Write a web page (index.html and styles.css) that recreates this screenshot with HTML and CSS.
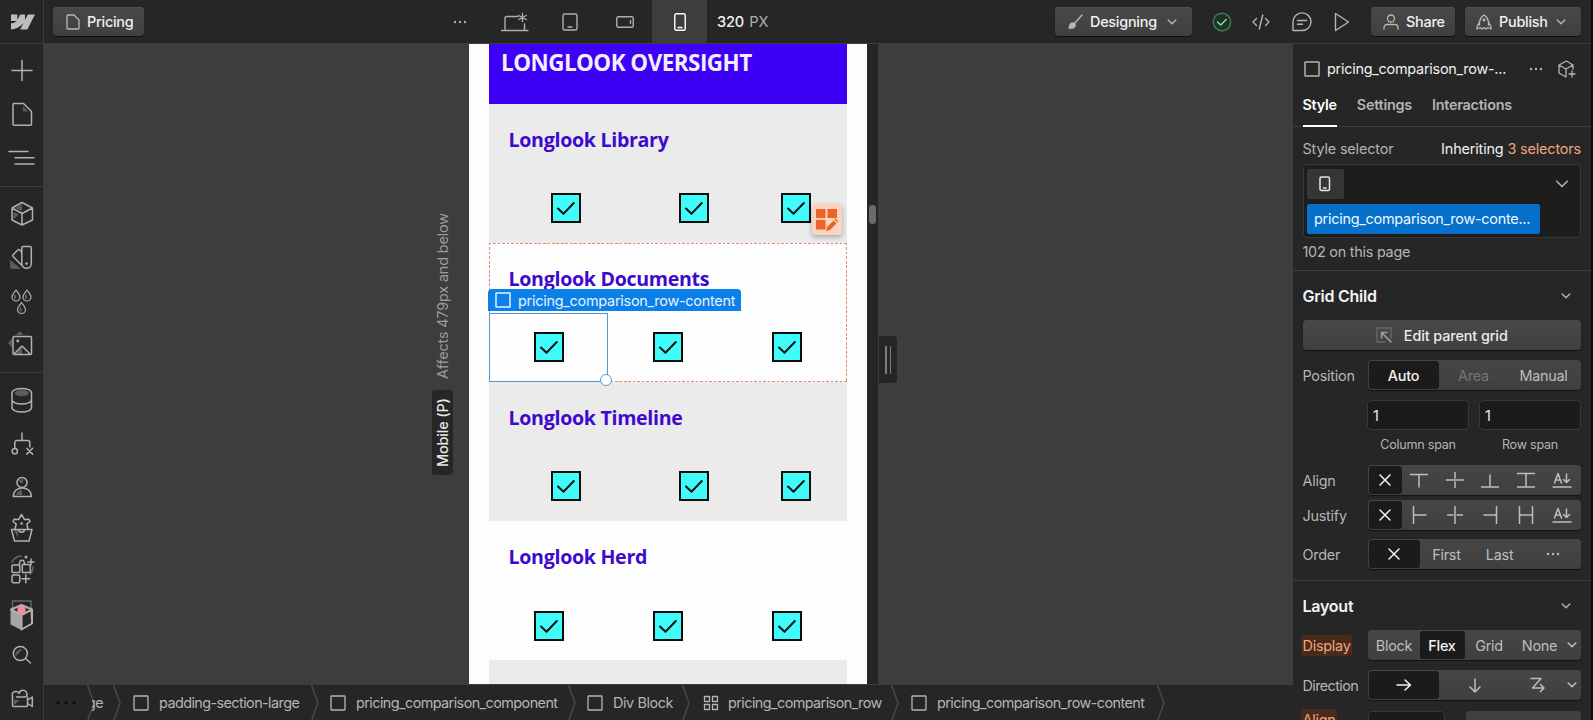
FILE: index.html
```html
<!DOCTYPE html>
<html lang="en">
<head>
    <meta charset="UTF-8">
    <meta name="viewport" content="width=device-width, initial-scale=1.0">
    <title>Pricing - Designer</title>
    <link rel="stylesheet" href="styles.css">
</head>
<body>
    <svg class="defs">
        <symbol id="square" viewBox="0 0 16 16"><rect x="1" y="1" width="14" height="14" rx=".5"/></symbol>
        <symbol id="chevron" viewBox="0 0 10 8"><path d="M1.2 2 5 5.8 8.8 2"/></symbol>
        <symbol id="dots" viewBox="0 0 14 4"><g fill="currentColor" stroke="none"><circle cx="2" cy="2" r="1.2"/><circle cx="7" cy="2" r="1.2"/><circle cx="12" cy="2" r="1.2"/></g></symbol>
        <symbol id="close" viewBox="0 0 12 12"><path d="m1 1 10 10M11 1 1 11"/></symbol>
        <symbol id="check" viewBox="0 0 26 26"><path d="m5 13.5 5.500 5.300L20.800 8"/></symbol>
        <symbol id="sep" viewBox="0 0 8 36"><path d="M.5 0 7 18 .5 36"/></symbol>
        <symbol id="baseline" viewBox="0 0 20 16"><path d="M1 15h18M2.500 11 6 1.500 9.500 11M3.700 8h4.600M14.500 2v8.500M11.500 7.500l3 3 3-3"/></symbol>
    </svg>

    <div class="app">
        <header class="topbar">
            <div class="logo">
                <svg width="24" height="24" viewBox="0 0 24 24"><path d="M24 4.515l-7.658 14.97H9.149l3.205-6.204h-.144C9.566 16.713 5.621 18.973 0 19.485v-6.118s3.596-.213 5.710-2.435H0V4.515h6.417v5.278l.144-.001 2.622-5.277h4.854v5.244h.144l2.720-5.244H24z"/></svg>
            </div>
            <button class="btn btn-page">
                <svg width="14" height="16"><path d="M1 2a1 1 0 0 1 1-1h6l5 5v8a1 1 0 0 1-1 1H2a1 1 0 0 1-1-1z"/></svg>
                <span>Pricing</span>
            </button>

            <div class="devices">
                <div class="device"><svg width="14" height="4"><use href="#dots"/></svg></div>
                <div class="device"><svg width="28" height="20"><path d="M0 18.500h27M4 18.500V6a1.500 1.500 0 0 1 1.500-1.500H17M23.500 12v6.500M21.500 1.500v8M17.700 3.500l7.600 4M25.300 3.500l-7.600 4"/></svg></div>
                <div class="device"><svg width="16" height="18"><rect x="1" y="1" width="14" height="16" rx="1.500"/><path d="M6 14h4"/></svg></div>
                <div class="device"><svg width="18" height="12"><rect x=".8" y=".8" width="16.400" height="10.400" rx="1.500"/><path d="M14.500 4.500v3"/></svg></div>
                <div class="device active"><svg width="12" height="18"><rect x=".8" y=".8" width="10.400" height="16.400" rx="1.500"/><path d="M4 14.500h4"/></svg></div>
                <div class="width"><b>320</b> PX</div>
            </div>

            <div class="actions">
                <button class="btn btn-mode">
                    <svg width="15" height="15"><path d="m14 1-7 8"/><path d="M1 14c1-1 0-5 4-5 3 0 3 5-1 5z" fill="currentColor"/></svg>
                    <span>Designing</span>
                    <svg class="chev" width="10" height="8"><use href="#chevron"/></svg>
                </button>
                <svg class="act status" width="20" height="20"><circle cx="10" cy="10" r="8.700"/><path d="m5.500 10 3.300 3 5.400-5.500"/></svg>
                <svg class="act code" width="18" height="16"><path d="M4.500 4.500 1 8l3.500 3.500M13.500 4.500 17 8l-3.500 3.500M10.800 1 7.200 15"/></svg>
                <svg class="act comment" width="20" height="20"><path d="M1 18.500V10A9 8.800 0 1 1 10 18.500zM5.500 8.500h9M5.500 12.200h5"/></svg>
                <svg class="act play" width="16" height="20"><path d="M1.500 1.500 14.500 10 1.500 18.500z"/></svg>
                <button class="btn btn-share">
                    <svg width="16" height="16"><circle cx="8" cy="4.500" r="3.500"/><path d="M1 15v-1.500a3 3 0 0 1 3-3h8a3 3 0 0 1 3 3V15"/></svg>
                    <span>Share</span>
                </button>
                <button class="btn btn-publish">
                    <svg width="16" height="16"><path d="M3.500 11C3 6 5 3 8 1c3 2 5 5 4.500 10M3.500 8 1 12.500V15l3-1.500 2 1.500 2-1.500 2 1.500 2-1.500 3 1.500v-2.500L12.500 8"/><circle cx="8" cy="6" r=".8"/></svg>
                    <span>Publish</span>
                    <svg class="chev" width="10" height="8"><use href="#chevron"/></svg>
                </button>
            </div>
        </header>

        <nav class="sidebar">
            <div class="side-group">
                <svg><path d="M22 10.500v20M12 20.500h20"/></svg>
                <svg><path d="M13 11.500a1 1 0 0 1 1-1h9.500l8 8v12.800a1 1 0 0 1-1 1H14a1 1 0 0 1-1-1z"/><path class="shade" d="M23 13v5.500h5z"/></svg>
                <svg><path d="M9 15.500h19M15 21.700h19M15 28h19"/></svg>
            </div>
            <div class="side-group">
                <svg><path class="shade" d="m15 16 7-4v7zM13.500 20l5 2.500-5 5z"/><path d="m22 10.500 10.500 5.500v12L22 33l-10-5V16zM12 16l10 5.500L32.500 16M22 21.500V33"/></svg>
                <svg><path class="shade" d="M10 25 21 34H12q-2 0-2-2z"/><path d="M21.800 13a1.500 1.500 0 0 1 1.500-1.500h6.500a1.500 1.500 0 0 1 1.500 1.500v15.500a4.700 4.700 0 0 1-9.500 0zM21.800 17.500l-2-2.500q-1-.8-2 0l-4.500 4.500q-1 1 0 2.200L23.500 32"/><circle cx="26.500" cy="28.500" r=".6"/></svg>
                <svg class="drops"><path d="M16 12c2 3 4 5 4 7a4 4 0 0 1-8 0c0-2 2-4 4-7zM27 12c2 3 4 5 4 7a4 4 0 0 1-8 0c0-2 2-4 4-7zM21.500 24.500c2 3 4 5 4 7a4 4 0 0 1-8 0c0-2 2-4 4-7z"/><path class="shade" d="M14 17h2v4h-2zM25 17h2v4h-2zM19.500 29.500h2v4h-2z"/></svg>
                <svg><path class="shade" d="m20 10 3.500 4H16zM8 22l4-4.500v9zM18 30l4-4v7h-6z"/><rect x="13" y="15.500" width="18.500" height="18" rx="1"/><path d="m14 33 8-8 8 8"/><circle cx="17.800" cy="20" r=".7"/></svg>
            </div>
            <div class="side-group">
                <svg><ellipse class="shade" cx="21.700" cy="14" rx="7" ry="3.300"/><path d="M12 14v14.500c0 6 19.500 6 19.500 0V14c0-6-19.500-6-19.500 0zM12 20.500c0 6 19.500 6 19.500 0"/></svg>
                <svg><path d="M22 11v7.500M14.800 25.500v-5a2 2 0 0 1 2-2h11a2 2 0 0 1 2 2V25M26.800 26.300l5.800 5.800M32.600 26.300l-5.800 5.800"/><circle cx="14.800" cy="29.200" r="2.600"/></svg>
                <svg><path class="shade" d="M16 30c1-3 3-5 6-5v5zM19 15l4-1v4h-3z"/><circle cx="22" cy="17.500" r="5"/><path d="M13.300 31.500c0-11.500 18-11.500 18 0z"/></svg>
                <svg class="item-shop"><path class="shade" d="M14 22h4v8z"/><path d="M11.500 21.500h20.500l-3 11.500H14.500zM15 21l1.200-5-3.200-2.500 1-2.200 4.500.3L21.500 6.500l3 5.100 4.500-.3 1 2.200-3.200 2.500 1.200 5M18.800 21.500a2.800 2.800 0 0 0 5.600 0"/><circle cx="21.600" cy="15.500" r=".6"/></svg>
                <svg class="item-apps"><path class="dim" d="M12 14q3-5.500 9-6M33 19q0 4-2.500 7"/><rect x="12" y="17" width="7.800" height="7.500" rx="1"/><path d="M22.300 24.500v-8h6.500l1.500 1.500v6.500zM19.500 16.500q-.5-5 4-4l1.500 4M25.800 26.800v8M22 30.700h7.800M31 11v6M28 14h6"/><rect x="12" y="27" width="7.800" height="7.800" rx="1.500"/><circle cx="26" cy="9" r=".8"/></svg>
                <svg class="item-box"><path class="dim" d="M12.500 26V9h18.500v17"/><path class="face" d="m10.500 18 11 5.500V38L10.500 32.500z"/><path d="M11 17.500 21.500 13l10.500 4.500v14L21.500 37.500V23zM11 17.500l10.500 5.700L32 17.500" stroke-width="2"/><circle class="pink" cx="21.500" cy="18" r="4.300"/></svg>
                <svg class="item-search"><path class="shade" d="M15.500 19c-1-5 2-8 7-8z"/><circle cx="20.300" cy="15.500" r="7"/><path d="m25.500 20.500 5 4.500"/></svg>
                <svg class="item-video"><path class="shade" d="M14 26h6l-6 5z"/><path d="M12.500 22.500v9q0 1 1 1h13q1 0 1-1V23M27.800 26l4.500-3v9.500l-4.500-3"/><path d="M12.500 22.500a3.500 3.500 0 1 1 6.500-3 4 4 0 1 1 7.500 2.500q-1 1-2 1h-8"/></svg>
            </div>
        </nav>

        <main class="canvas">
            <div class="gutter">
                <div class="breakpoint">
                    <span class="bp-name">Mobile (P)</span>
                    <span>Affects 479px and below</span>
                </div>
            </div>
            <div class="page">
                <div class="page-header">LONGLOOK OVERSIGHT</div>
                <section class="row shaded">
                    <h3>Longlook Library</h3>
                    <div class="cells">
                        <span class="box"><svg><use href="#check"/></svg></span>
                        <span class="box"><svg><use href="#check"/></svg></span>
                        <span class="box"><svg><use href="#check"/></svg></span>
                    </div>
                </section>
                <section class="row parent">
                    <h3>Longlook Documents</h3>
                    <div class="cells">
                        <span class="box"><svg><use href="#check"/></svg></span>
                        <span class="box"><svg><use href="#check"/></svg></span>
                        <span class="box"><svg><use href="#check"/></svg></span>
                    </div>
                    <div class="selection"><i></i></div>
                    <div class="sel-label"><svg width="16" height="16"><use href="#square"/></svg><span>pricing_comparison_row-content</span></div>
                    <div class="grid-edit">
                        <svg width="22" height="22"><path d="M0 0h9.500v9H0zM11.500 0H21v9h-9.500zM0 11h9.500v9.500H0zM10 22l1-4 6.500-6.500 3 3L14 21zM18.500 10.500l1-1 3 3-1 1z"/></svg>
                    </div>
                </section>
                <section class="row shaded">
                    <h3>Longlook Timeline</h3>
                    <div class="cells">
                        <span class="box"><svg><use href="#check"/></svg></span>
                        <span class="box"><svg><use href="#check"/></svg></span>
                        <span class="box"><svg><use href="#check"/></svg></span>
                    </div>
                </section>
                <section class="row">
                    <h3>Longlook Herd</h3>
                    <div class="cells">
                        <span class="box"><svg><use href="#check"/></svg></span>
                        <span class="box"><svg><use href="#check"/></svg></span>
                        <span class="box"><svg><use href="#check"/></svg></span>
                    </div>
                </section>
                <section class="row shaded"></section>
            </div>
            <div class="scrollbar"><i></i></div>
            <div class="resize"><i></i><i></i></div>
        </main>

        <footer class="crumbs">
            <div class="crumb-more"><svg width="20" height="4" viewBox="0 0 20 4"><circle cx="2" cy="2" r="1.800"/><circle cx="10" cy="2" r="1.800"/><circle cx="18" cy="2" r="1.800"/></svg></div>
            <svg class="sep"><use href="#sep"/></svg>
            <div class="crumb-cut"><span>ge</span></div>
            <svg class="sep"><use href="#sep"/></svg>
            <div class="crumb c1"><svg width="16" height="16"><use href="#square"/></svg><span>padding-section-large</span></div>
            <svg class="sep"><use href="#sep"/></svg>
            <div class="crumb c2"><svg width="16" height="16"><use href="#square"/></svg><span>pricing_comparison_component</span></div>
            <svg class="sep"><use href="#sep"/></svg>
            <div class="crumb c3"><svg width="16" height="16"><use href="#square"/></svg><span>Div Block</span></div>
            <svg class="sep"><use href="#sep"/></svg>
            <div class="crumb c4"><svg width="16" height="16"><path d="M1.500 1.500h5v5h-5zM9.500 1.500h5v5h-5zM1.500 9.500h5v5h-5zM9.500 9.500h5v5h-5z"/></svg><span>pricing_comparison_row</span></div>
            <svg class="sep"><use href="#sep"/></svg>
            <div class="crumb c5"><svg width="16" height="16"><use href="#square"/></svg><span>pricing_comparison_row-content</span></div>
            <svg class="sep"><use href="#sep"/></svg>
        </footer>

        <aside class="panel">
            <div class="element">
                <svg width="16" height="16"><use href="#square"/></svg>
                <span class="element-name">pricing_comparison_row-...</span>
                <svg width="14" height="4"><use href="#dots"/></svg>
                <svg class="component" width="18" height="18"><path d="M8 17 1 13V5l7.500-4L15 5v4M1 5l7 4 7-4M8 9v8M14 11v6M11 14h6"/></svg>
            </div>
            <div class="tabs">
                <span class="tab active">Style</span>
                <span class="tab">Settings</span>
                <span class="tab">Interactions</span>
            </div>
            <div class="selector">
                <div class="selector-head"><span>Style selector</span><span class="inherit">Inheriting <em>3 selectors</em></span></div>
                <div class="selector-box">
                    <div class="selector-top">
                        <span class="chip-device"><svg width="12" height="16"><rect x="1" y="1" width="9.500" height="13.500" rx="1.500"/><path d="M4.500 12h2.500"/></svg></span>
                        <svg width="14" height="12" viewBox="0 0 10 8"><use href="#chevron"/></svg>
                    </div>
                    <span class="chip">pricing_comparison_row-conte...</span>
                </div>
                <div class="count">102 on this page</div>
            </div>

            <div class="section grid-child">
                <div class="section-head"><span>Grid Child</span><svg width="10" height="8"><use href="#chevron"/></svg></div>
                <button class="edit-grid">
                    <svg width="16" height="16"><path class="dim" d="M1 15V1h14v10M1 15h8"/><path d="M5.500 11V5.500H11M5.500 5.500 15 15"/></svg>
                    <span>Edit parent grid</span>
                </button>
                <div class="field position">
                    <label>Position</label>
                    <div class="seg"><span class="on">Auto</span><span class="off">Area</span><span>Manual</span></div>
                </div>
                <div class="field spans">
                    <label></label>
                    <div class="span-input"><input type="text" value="1"><small>Column span</small></div>
                    <div class="span-input"><input type="text" value="1"><small>Row span</small></div>
                </div>
                <div class="field align">
                    <label>Align</label>
                    <div class="seg icons">
                        <span class="on"><svg width="12" height="12"><use href="#close"/></svg></span>
                        <span><svg width="18" height="16"><path d="M0 2.500h18M9 2.500V15"/></svg></span>
                        <span><svg width="18" height="16"><path d="M0 8h18M9 0v6M9 10v6"/></svg></span>
                        <span><svg width="18" height="16"><path d="M0 15h18M9 3v12"/></svg></span>
                        <span><svg width="18" height="16"><path d="M0 1.500h18M0 15h18M9 1.500V15"/></svg></span>
                        <span><svg width="20" height="16"><use href="#baseline"/></svg></span>
                    </div>
                </div>
                <div class="field justify">
                    <label>Justify</label>
                    <div class="seg icons">
                        <span class="on"><svg width="12" height="12"><use href="#close"/></svg></span>
                        <span><svg width="16" height="18"><path d="M2.500 0v18M2.500 9H15"/></svg></span>
                        <span><svg width="16" height="18"><path d="M8 0v18M0 9h6M10 9h6"/></svg></span>
                        <span><svg width="16" height="18"><path d="M14.500 0v18M2 9h12.500"/></svg></span>
                        <span><svg width="16" height="18"><path d="M1.500 0v18M14.500 0v18M1.500 9h13"/></svg></span>
                        <span><svg width="20" height="16"><use href="#baseline"/></svg></span>
                    </div>
                </div>
                <div class="field order">
                    <label>Order</label>
                    <div class="seg">
                        <span class="on"><svg width="12" height="12"><use href="#close"/></svg></span>
                        <span>First</span><span>Last</span>
                        <span><svg width="14" height="4"><use href="#dots"/></svg></span>
                    </div>
                </div>
            </div>

            <div class="section layout">
                <div class="section-head"><span>Layout</span><svg width="10" height="8"><use href="#chevron"/></svg></div>
                <div class="field display">
                    <label><mark>Display</mark></label>
                    <div class="seg"><span>Block</span><span class="on">Flex</span><span>Grid</span><span>None</span><span><svg width="10" height="8"><use href="#chevron"/></svg></span></div>
                </div>
                <div class="field direction">
                    <label>Direction</label>
                    <div class="seg">
                        <span class="on"><svg width="16" height="14"><path d="M1 7h13.500M9 2l5.500 5L9 12"/></svg></span>
                        <span><svg width="12" height="15"><path d="M6 1v13M1 9l5 5 5-5"/></svg></span>
                        <span><svg width="16" height="16"><path d="M1 1.500h10L2.500 11H14M10.500 7.500 14 11l-3.500 3.500"/></svg></span>
                        <span><svg width="10" height="8"><use href="#chevron"/></svg></span>
                    </div>
                </div>
                <div class="field flex-align">
                    <label><mark>Align</mark></label>
                    <div class="stub-dark"></div>
                    <div class="stub-light"></div>
                </div>
            </div>
        </aside>
    </div>
</body>
</html>
```
FILE: styles.css
```css
* {
    box-sizing: border-box;
}

body {
    margin: 0;
    height: 720px;
    overflow: hidden;
    background: #0b0b0b;
    color: #b4b4b4;
    font-family: Inter, "Liberation Sans", sans-serif;
    font-size: 14.4px;
    letter-spacing: -0.24px;
}

svg {
    display: block;
    flex: none;
    fill: none;
    stroke: currentColor;
    stroke-width: 1.5;
    stroke-linecap: round;
    stroke-linejoin: round;
}

.defs {
    position: absolute;
    width: 0;
    height: 0;
}

.app {
    display: grid;
    grid-template-columns: 44px 1249px 298px;
    grid-template-rows: 44px 640px 36px;
    width: 1591px;
}

/* top bar */
.topbar {
    grid-column: 1 / 4;
    display: flex;
    align-items: center;
    background: #262626;
    border-bottom: 1px solid #3c3c3c;
}

.logo {
    display: flex;
    align-items: center;
    width: 44px;
    height: 43px;
    padding-left: 11px;
    border-right: 1px solid #3c3c3c;
}

.logo svg {
    fill: #bdbdbd;
    stroke: none;
}

.btn {
    display: flex;
    align-items: center;
    height: 29px;
    padding: 0;
    border: 0;
    border-radius: 4px;
    background: linear-gradient(#484848, #404040);
    box-shadow: 0 1px 1px #111, inset 0 1px 0 #505050;
    color: #b8b8b8;
    font: inherit;
    letter-spacing: inherit;
    white-space: nowrap;
}

.btn span {
    color: #f0f0f0;
    font-weight: 500;
}

.btn svg {
    stroke-width: 1.3;
}

.btn .chev {
    margin-left: auto;
    margin-right: 15px;
}

.btn-page {
    width: 91px;
    margin-left: 9px;
    padding-left: 13px;
    gap: 7px;
}

.devices {
    display: flex;
    align-items: center;
    height: 43px;
    margin-left: 288px;
    color: #adadad;
}

.devices svg {
    stroke-width: 1.4;
}

.device {
    display: flex;
    align-items: center;
    justify-content: center;
    width: 55px;
    height: 43px;
}

.device.active {
    background: #3d3d3d;
    color: #fff;
}

.width {
    margin-left: 10px;
    font-size: 14.6px;
    letter-spacing: -0.2px;
    word-spacing: 1.5px;
}

.width b {
    color: #f2f2f2;
    font-weight: 500;
}

.actions {
    display: flex;
    align-items: center;
    margin-left: auto;
    margin-right: 10px;
}

.btn-mode {
    width: 137px;
    padding-left: 13px;
    gap: 7px;
}

.act {
    stroke-width: 1.4;
}

.status {
    margin-left: 20px;
    color: #8fe0a0;
}

.status circle {
    fill: #1d3325;
    stroke: #4c7a59;
}

.code {
    margin-left: 20px;
}

.comment {
    margin-left: 22px;
}

.play {
    margin-left: 22px;
}

.btn-share {
    width: 84px;
    margin-left: 21px;
    padding-left: 12px;
    gap: 7px;
}

.btn-publish {
    width: 116px;
    margin-left: 10px;
    padding-left: 11px;
    gap: 7px;
}

/* left tools */
.sidebar {
    grid-row: 2 / 4;
    background: #262626;
    border-right: 1px solid #3c3c3c;
    color: #b0b0b0;
}

.side-group {
    padding: 6px 0;
    border-bottom: 1px solid #3c3c3c;
}

.side-group:nth-child(1) {
    padding-bottom: 7px;
}

.side-group:nth-child(2) {
    padding: 5px 0 8px;
}

.side-group:last-child {
    padding-bottom: 0;
    border: 0;
}

.side-group svg {
    width: 43px;
    height: 43px;
}

.side-group .drops {
    stroke-width: 1.2;
}

.side-group .item-shop { height: 40px; }
.side-group .item-apps { height: 44px; }
.side-group .item-box { height: 46px; }
.side-group .item-search { height: 36px; }
.side-group .item-video { height: 46px; }

.shade {
    fill: #5c5c5c;
    stroke: none;
}

.dim {
    stroke: #666;
}

.face {
    fill: #a5a5a5;
    stroke: none;
}

.pink {
    fill: #f58a98;
    stroke: none;
}

/* canvas */
.canvas {
    display: flex;
    background: #3d3d3d;
    overflow: hidden;
}

.gutter {
    width: 425px;
    padding: 165px 16px 0 0;
    display: flex;
    justify-content: flex-end;
    align-items: flex-start;
}

.breakpoint {
    display: flex;
    align-items: center;
    gap: 11px;
    height: 266px;
    writing-mode: vertical-rl;
    transform: rotate(180deg);
    color: #9c9c9c;
    letter-spacing: -0.15px;
    white-space: nowrap;
}

.bp-name {
    width: 21px;
    height: 85px;
    line-height: 21px;
    text-align: center;
    background: #262626;
    border-radius: 3px;
    color: #e8e8e8;
    font-weight: 500;
}

.page {
    width: 398px;
    height: 640px;
    padding: 0 20px;
    background: #fdfdfd;
    font-family: "Open Sans", "Noto Sans", sans-serif;
}

.page-header {
    height: 59.5px;
    padding: 2px 12px;
    background: #3c00f5;
    color: #f4eefc;
    font-size: 22.4px;
    font-weight: 700;
    line-height: 34px;
    letter-spacing: -0.5px;
    white-space: nowrap;
}

.row {
    position: relative;
    height: 139.2px;
}

.row.shaded {
    background: #ebebeb;
}

.row h3 {
    margin: 0;
    height: 70px;
    padding: 22px 0 0 19.5px;
    color: #3d0acb;
    font-size: 19.6px;
    font-weight: 700;
    line-height: 28px;
    letter-spacing: -0.3px;
}

.cells {
    display: grid;
    grid-template-columns: repeat(3, 1fr);
    place-items: center;
    height: 69px;
}

.shaded .cells {
    grid-template-columns: 154px 102px 102px;
}

.box {
    width: 30px;
    height: 30px;
    border: 2px solid #0c0c0c;
    background: #3ffcfb;
    color: #111;
}

.box svg {
    width: 26px;
    height: 26px;
    stroke-width: 2;
}

/* dotted frame around the parent grid */
.parent {
    z-index: 1;
    background:
        repeating-linear-gradient(90deg, #d5936f 0 2.5px, transparent 2.5px 4.5px) top / 100% 1px no-repeat,
        repeating-linear-gradient(90deg, #d5936f 0 2.5px, transparent 2.5px 4.5px) bottom / 100% 1px no-repeat,
        repeating-linear-gradient(#d5936f 0 2.5px, transparent 2.5px 4.5px) left / 1px 100% no-repeat,
        repeating-linear-gradient(#d5936f 0 2.5px, transparent 2.5px 4.5px) right / 1px 100% no-repeat;
}

/* selected element overlays */
.selection {
    position: absolute;
    left: 0;
    top: 70px;
    width: 119px;
    height: 69px;
    border: 1px solid #4f98d3;
}

.selection i {
    position: absolute;
    right: -5px;
    bottom: -5px;
    width: 12px;
    height: 12px;
    border: 1px solid #5b9dd4;
    border-radius: 50%;
    background: #fff;
}

.sel-label {
    position: absolute;
    left: -1px;
    top: 46.5px;
    width: 253px;
    height: 22px;
    display: flex;
    align-items: center;
    gap: 7px;
    padding-left: 7px;
    border-radius: 4px 4px 0 0;
    background: #0b80e8;
    color: #e6f2ff;
    font-family: Inter, sans-serif;
    white-space: nowrap;
}

.grid-edit {
    position: absolute;
    left: 323px;
    top: -39px;
    width: 30px;
    height: 31px;
    padding: 5px 4px;
    border-radius: 4px;
    background: #fbd3bf;
    box-shadow: 0 2px 5px rgba(0, 0, 0, .3);
}

.grid-edit svg {
    fill: #eb6527;
    stroke: none;
}

.scrollbar {
    width: 11px;
    padding: 161px 2px 0;
    background: #262626;
}

.scrollbar i {
    display: block;
    width: 7px;
    height: 19px;
    border-radius: 4px;
    background: #6a6a6a;
}

.resize {
    display: flex;
    align-items: center;
    justify-content: center;
    gap: 3px;
    width: 18px;
    height: 47px;
    margin: 292px 0 0 1px;
    border-radius: 0 4px 4px 0;
    background: #262626;
}

.resize i {
    width: 1.5px;
    height: 28px;
    background: #7c7c7c;
}

/* breadcrumbs */
.crumbs {
    grid-column: 2;
    grid-row: 3;
    display: flex;
    align-items: center;
    background: #262626;
    border-top: 1px solid #3c3c3c;
    overflow: hidden;
    letter-spacing: -0.57px;
    white-space: nowrap;
}

.crumb-more {
    width: 43px;
    padding-left: 12px;
}

.crumb-more svg {
    fill: #0d0d0d;
    stroke: none;
}

.sep {
    width: 8px;
    height: 36px;
    stroke: #484848;
}

/* mostly scrolled under the overflow menu */
.crumb-cut {
    display: flex;
    justify-content: flex-end;
    width: 18px;
    padding-right: 10px;
    clip-path: inset(0 0 0 -3px);
}

.crumb {
    display: flex;
    align-items: center;
    gap: 10px;
    padding-left: 12px;
}

.crumb svg {
    stroke-width: 1.3;
}

.c1 { width: 190px; }
.c2 { width: 249px; padding-left: 11px; }
.c3 { width: 106px; padding-left: 11px; letter-spacing: -0.4px; }
.c4 { width: 201px; padding-left: 13px; gap: 9px; }
.c5 { width: 258px; }

/* style panel */
.panel {
    grid-column: 3;
    grid-row: 2 / 4;
    background: #262626;
    overflow: hidden;
    white-space: nowrap;
}

.element {
    display: flex;
    align-items: center;
    height: 50px;
    padding: 0 0 1px 11px;
}

.element-name {
    width: 202px;
    margin-left: 7px;
    color: #f0f0f0;
}

.component {
    margin-left: 15px;
    stroke-width: 1.3;
}

.tabs {
    display: flex;
    gap: 20px;
    height: 33px;
    padding-left: 9.5px;
    border-bottom: 1px solid #3c3c3c;
    font-weight: 600;
}

.tab {
    height: 33px;
    line-height: 22px;
}

.tab.active {
    color: #fff;
    border-bottom: 2px solid #fff;
}

.selector {
    height: 144px;
    padding: 10px 10px 0 9.5px;
    border-bottom: 1px solid #3c3c3c;
}

.selector-head {
    display: flex;
    justify-content: space-between;
    height: 27px;
    line-height: 23px;
    letter-spacing: -0.15px;
}

.inherit {
    color: #f0f0f0;
}

.inherit em {
    color: #f0a57c;
    font-style: normal;
}

.selector-box {
    height: 74px;
    padding: 4px 3px;
    border: 1px solid #383838;
    border-radius: 4px;
    background: #1d1d1d;
}

.selector-top {
    display: flex;
    justify-content: space-between;
    align-items: center;
    height: 30px;
    padding-right: 8px;
}

.chip-device {
    display: flex;
    align-items: center;
    justify-content: center;
    width: 37px;
    height: 30px;
    border-radius: 2px;
    background: #363636;
    color: #e6e6e6;
}

.selector-top > svg {
    stroke-width: 1.1;
}

.chip {
    display: block;
    width: 233px;
    height: 30px;
    margin-top: 5px;
    padding-left: 7.5px;
    border-radius: 2px;
    background: #0670cb;
    color: #f0f7ff;
    line-height: 29px;
}

.count {
    line-height: 27px;
}

.section {
    padding: 0 10px 0 9.5px;
}

.grid-child {
    height: 310px;
    border-bottom: 1px solid #3c3c3c;
}

.section-head {
    display: flex;
    align-items: center;
    justify-content: space-between;
    height: 49px;
    padding-right: 10px;
}

.section-head span {
    color: #f4f4f4;
    font-size: 16px;
    font-weight: 600;
}

.edit-grid {
    display: flex;
    align-items: center;
    justify-content: center;
    gap: 12px;
    width: 100%;
    height: 30px;
    padding: 0;
    border: 0;
    border-radius: 4px;
    background: linear-gradient(#484848, #404040);
    box-shadow: 0 1px 1px #111;
    color: #a0a0a0;
    font: inherit;
    letter-spacing: -0.1px;
}

.edit-grid span {
    color: #ececec;
    font-weight: 500;
}

.field {
    display: flex;
    align-items: center;
    height: 30px;
}

.field label {
    width: 65px;
}

.seg {
    display: flex;
    width: 213px;
    height: 30px;
    padding: 1px;
    border-radius: 4px;
    background: linear-gradient(#464646, #3f3f3f);
    box-shadow: 0 1px 1px #131313;
}

.seg span {
    display: flex;
    align-items: center;
    justify-content: center;
    color: #bdbdbd;
}

.seg .on {
    border-radius: 3px;
    background: #1b1b1b;
    color: #f2f2f2;
    font-weight: 500;
}

.seg .off {
    color: #757575;
}

.position { margin-top: 10px; }
.position .seg span { width: 70px; }

.spans {
    align-items: flex-start;
    height: 64px;
    margin-top: 10px;
}

.span-input {
    display: flex;
    flex-direction: column;
    align-items: center;
    width: 102px;
}

.span-input + .span-input {
    margin-left: 10px;
}

.span-input input {
    width: 102px;
    height: 30px;
    padding: 0 5px;
    border: 1px solid #383838;
    border-radius: 4px;
    background: #1b1b1b;
    color: #ececec;
    font: inherit;
}

.span-input small {
    font-size: 12.6px;
    line-height: 29px;
    letter-spacing: -0.25px;
}

.align { margin-top: 1px; }
.icons span { width: 35.6px; }
.icons .on { width: 33px; }
.justify { margin-top: 5px; }
.order { margin-top: 9px; }
.order .seg span { width: 54px; }
.order .seg .on { width: 52px; }

mark {
    padding: 2px 1px 2px 2px;
    margin-left: -2px;
    background: #4a2a1c;
    color: #f0a57c;
    border-radius: 2px;
}

.layout .seg span:last-child {
    flex: 1;
}

.display .seg span:nth-child(1) { width: 51px; }
.display .seg span:nth-child(2) { width: 45px; }
.display .seg span:nth-child(3) { width: 49px; }
.display .seg span:nth-child(4) { width: 50px; padding-left: 2px; }

.direction { margin-top: 10px; }
.direction label { letter-spacing: -0.6px; }
.direction .seg span:nth-child(1) { width: 70px; }
.direction .seg span:nth-child(2) { width: 73px; }
.direction .seg span:nth-child(3) { width: 52px; }

.flex-align {
    align-items: flex-start;
    margin-top: 11px;
}

.stub-dark {
    width: 77px;
    height: 30px;
    border: 1px solid #383838;
    border-radius: 4px;
    background: #1b1b1b;
}

.stub-light {
    width: 115px;
    height: 30px;
    margin-left: 21px;
    border-radius: 4px;
    background: #404040;
}
```
